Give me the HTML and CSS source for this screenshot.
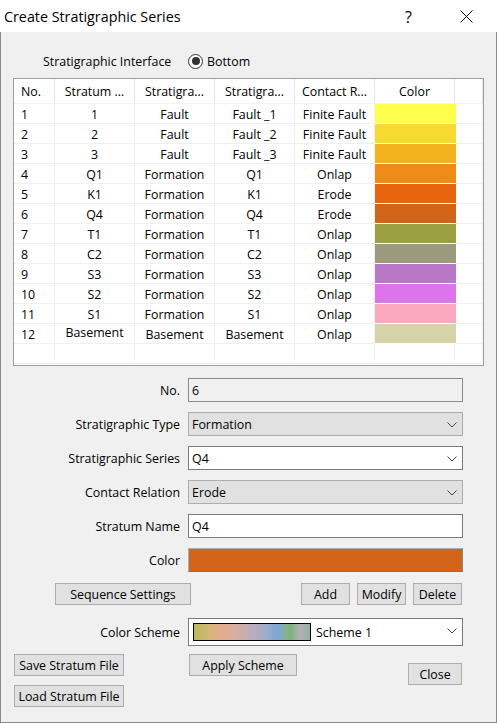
FILE: index.html
```html
<!DOCTYPE html>
<html>
<head>
<meta charset="utf-8">
<link rel="stylesheet" href="styles.css">
</head>
<body>
<div class="window">
  <div class="titlebar">
    <span class="title">Create Stratigraphic Series</span>
    <span class="help">?</span>
    <svg class="xbtn" width="13" height="13" viewBox="0 0 13 13"><path d="M0.5 0.5 L12.5 12.5 M12.5 0.5 L0.5 12.5" stroke="#000" stroke-width="1" fill="none"/></svg>
  </div>
  <div class="content">
    <div class="iface">
      <span class="iface-label">Stratigraphic Interface</span>
      <span class="radio"><span class="dot"></span></span>
      <span class="radio-label">Bottom</span>
    </div>

    <div class="tablebox">
      <div class="row head">
        <div class="c left">No.</div><div class="c">Stratum ...</div><div class="c">Stratigra...</div><div class="c">Stratigra...</div><div class="c">Contact R...</div><div class="c">Color</div><div class="c"></div>
      </div>
      <div class="row"><div class="c left">1</div><div class="c">1</div><div class="c">Fault</div><div class="c">Fault _1</div><div class="c">Finite Fault</div><div class="c sw c1"></div><div class="c"></div></div>
      <div class="row"><div class="c left">2</div><div class="c">2</div><div class="c">Fault</div><div class="c">Fault _2</div><div class="c">Finite Fault</div><div class="c sw c2"></div><div class="c"></div></div>
      <div class="row"><div class="c left">3</div><div class="c">3</div><div class="c">Fault</div><div class="c">Fault _3</div><div class="c">Finite Fault</div><div class="c sw c3"></div><div class="c"></div></div>
      <div class="row"><div class="c left">4</div><div class="c">Q1</div><div class="c">Formation</div><div class="c">Q1</div><div class="c">Onlap</div><div class="c sw c4"></div><div class="c"></div></div>
      <div class="row"><div class="c left">5</div><div class="c">K1</div><div class="c">Formation</div><div class="c">K1</div><div class="c">Erode</div><div class="c sw c5"></div><div class="c"></div></div>
      <div class="row"><div class="c left">6</div><div class="c">Q4</div><div class="c">Formation</div><div class="c">Q4</div><div class="c">Erode</div><div class="c sw c6"></div><div class="c"></div></div>
      <div class="row"><div class="c left">7</div><div class="c">T1</div><div class="c">Formation</div><div class="c">T1</div><div class="c">Onlap</div><div class="c sw c7"></div><div class="c"></div></div>
      <div class="row"><div class="c left">8</div><div class="c">C2</div><div class="c">Formation</div><div class="c">C2</div><div class="c">Onlap</div><div class="c sw c8"></div><div class="c"></div></div>
      <div class="row"><div class="c left">9</div><div class="c">S3</div><div class="c">Formation</div><div class="c">S3</div><div class="c">Onlap</div><div class="c sw c9"></div><div class="c"></div></div>
      <div class="row"><div class="c left">10</div><div class="c">S2</div><div class="c">Formation</div><div class="c">S2</div><div class="c">Onlap</div><div class="c sw c10"></div><div class="c"></div></div>
      <div class="row"><div class="c left">11</div><div class="c">S1</div><div class="c">Formation</div><div class="c">S1</div><div class="c">Onlap</div><div class="c sw c11"></div><div class="c"></div></div>
      <div class="row"><div class="c left">12</div><div class="c up">Basement</div><div class="c">Basement</div><div class="c">Basement</div><div class="c">Onlap</div><div class="c sw c12"></div><div class="c"></div></div>
      <div class="row"><div class="c left"></div><div class="c"></div><div class="c"></div><div class="c"></div><div class="c"></div><div class="c"></div><div class="c"></div></div>
    </div>

    <div class="form">
      <label class="lbl">No.</label>
      <div class="field disabled">6</div>
      <label class="lbl">Stratigraphic Type</label>
      <div class="field combo gray">Formation<svg class="chev" width="10" height="6" viewBox="0 0 10 6"><path d="M0.5 0.5 L5 5 L9.5 0.5" stroke="#444" fill="none"/></svg></div>
      <label class="lbl">Stratigraphic Series</label>
      <div class="field combo">Q4<svg class="chev" width="10" height="6" viewBox="0 0 10 6"><path d="M0.5 0.5 L5 5 L9.5 0.5" stroke="#444" fill="none"/></svg></div>
      <label class="lbl">Contact Relation</label>
      <div class="field combo gray">Erode<svg class="chev" width="10" height="6" viewBox="0 0 10 6"><path d="M0.5 0.5 L5 5 L9.5 0.5" stroke="#444" fill="none"/></svg></div>
      <label class="lbl">Stratum Name</label>
      <div class="field">Q4</div>
      <label class="lbl">Color</label>
      <div class="field colorbtn"></div>
    </div>

    <div class="btnrow">
      <button class="btn seq">Sequence Settings</button>
      <div class="spacer"></div>
      <button class="btn small">Add</button>
      <button class="btn small">Modify</button>
      <button class="btn small">Delete</button>
    </div>

    <div class="schemerow">
      <label class="lbl">Color Scheme</label>
      <div class="field combo scheme"><span class="grad"></span><span class="scheme-name">Scheme 1</span><svg class="chev" width="10" height="6" viewBox="0 0 10 6"><path d="M0.5 0.5 L5 5 L9.5 0.5" stroke="#444" fill="none"/></svg></div>
    </div>

    <div class="bottom">
      <div class="col-left">
        <button class="btn file">Save Stratum File</button>
        <button class="btn file">Load Stratum File</button>
      </div>
      <button class="btn apply">Apply Scheme</button>
      <div class="spacer"></div>
      <button class="btn close">Close</button>
    </div>
  </div>
</div>
</body>
</html>
```
FILE: styles.css
```css
* { box-sizing: border-box; }
html, body { margin: 0; padding: 0; }
body {
  width: 497px; height: 723px; overflow: hidden;
  font-family: "Open Sans", "Noto Sans", sans-serif;
  font-size: 12.4px; color: #000;
  background: #f0f0f0;
}
.window { width: 497px; height: 723px; display: flex; flex-direction: column; }
.titlebar {
  height: 32px; background: #fff; position: relative;
  display: flex; align-items: center; flex-shrink: 0;
}
.title { font-size: 14.3px; margin-left: 4px; margin-top: 0; }
.help { position: absolute; left: 405px; top: 6px; font-size: 16px; }
.xbtn { position: absolute; left: 460px; top: 10px; }

.content {
  flex: 1;
  border: 1px solid #8a8a8a; border-top: none;
  background: #f0f0f0;
  padding-top: 19px;
}
.iface { height: 20px; display: flex; align-items: center; margin-left: 42px; }
.iface-label { width: 145px; }
.radio {
  width: 15px; height: 15px; border: 1px solid #333; border-radius: 50%;
  display: flex; align-items: center; justify-content: center; background: #fff;
}
.dot { width: 8px; height: 8px; border-radius: 50%; background: #333; }
.radio-label { margin-left: 4px; }

.tablebox {
  margin: 7px 0 0 12px; width: 471px; height: 288px;
  border: 1px solid #a0a0a0; background: #fff; overflow: hidden;
}
.row {
  display: grid; grid-template-columns: 41px 80px 80px 80px 80px 80px 1fr;
  height: 20px;
}
.row.head { height: 25px; }
.c {
  border-right: 1px solid #f0f0f0; border-bottom: 1px solid #f0f0f0;
  display: flex; align-items: center; justify-content: center;
  white-space: nowrap; overflow: hidden; padding-top: 1px;
}
.head .c { border-bottom: 1px solid #f4f4f4; border-right-color: #e5e5e5; padding-top: 1px; }
.c.left { justify-content: flex-start; padding-left: 7px; }
.c.up { align-items: flex-start; padding-top: 0; }
.sw { border-right: none; border-bottom-color: #fff; margin-right: -1px; }
.c1 { background: #fefe4c; }
.c2 { background: #f8d92f; }
.c3 { background: #f2b21e; }
.c4 { background: #ef8b17; }
.c5 { background: #e8640f; }
.c6 { background: #d2651a; }
.c7 { background: #9a9f3f; }
.c8 { background: #9b9a7c; }
.c9 { background: #b878c5; }
.c10 { background: #db75e9; }
.c11 { background: #f9a8bd; }
.c12 { background: #d6d3a8; }

.form {
  margin-top: 12px;
  display: grid; grid-template-columns: 179px 275px; column-gap: 8px; row-gap: 10px;
  grid-auto-rows: 24px;
}
.lbl { display: flex; align-items: center; justify-content: flex-end; }
.field {
  position: relative; height: 24px; border: 1px solid #7a7a7a; background: #fff;
  display: flex; align-items: center; padding-left: 3px;
}
.field.disabled { background: #f0f0f0; border-color: #8a8a8a; }
.field.gray { background: #e1e1e1; border-color: #adadad; }
.chev { position: absolute; right: 5px; top: 9px; }
.colorbtn { background: #d2651a; border-color: #adadad; border-bottom-color: #777; border-right-color: #888; }

.btn {
  font-family: inherit; font-size: 12.4px; color: #000;
  background: #e1e1e1; border: 1px solid #adadad; border-radius: 0;
  height: 22px; padding: 0; margin: 0;
  display: flex; align-items: center; justify-content: center;
}
.btnrow { display: flex; margin-top: 11px; margin-right: 34px; gap: 7px; }
.seq { width: 136px; margin-left: 54px; }
.spacer { flex: 1; }
.small { width: 49px; }

.schemerow {
  margin-top: 13px;
  display: grid; grid-template-columns: 179px 275px; column-gap: 8px; height: 28px;
}
.scheme { height: 28px; padding-left: 4px; }
.grad {
  width: 118px; height: 18px; border: 1px solid #000;
  background: linear-gradient(to right, #bdbb5c 0%, #d3b677 13%, #e6ae90 25%, #d2afa6 38%, #b8aec2 52%, #9eacca 62%, #7ea8d6 72%, #87b08c 80%, #7db27a 83%, #a7b0a6 89%, #b3b0b3 92%, #8fb2a2 100%);
}
.scheme-name { margin-left: 5px; padding-top: 1px; }

.bottom { display: flex; margin-top: 8px; margin-right: 34px; align-items: flex-start; }
.col-left { display: flex; flex-direction: column; gap: 9px; margin-left: 13px; }
.file { width: 110px; }
.apply { width: 108px; margin-left: 65px; }
.close { width: 54px; margin-top: 9px; }
```
